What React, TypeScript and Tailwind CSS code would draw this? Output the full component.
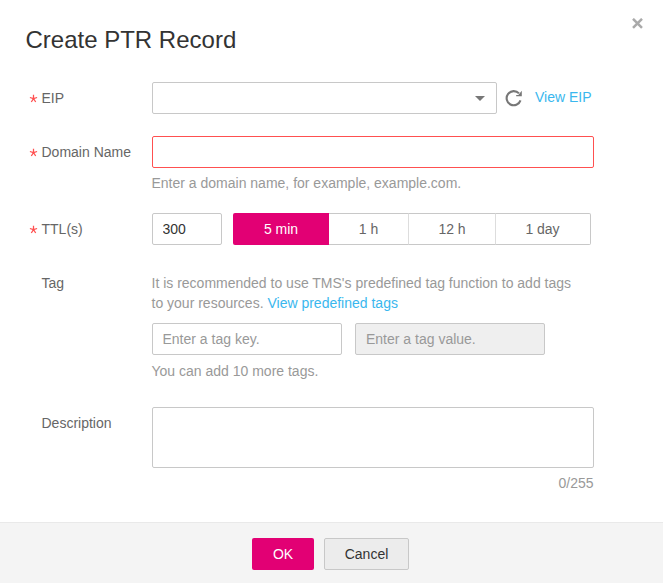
import type { ReactNode } from "react";

type RowProps = { label: string; required?: boolean; className: string; children: ReactNode };

const field = "block h-8 rounded-[2px] border border-solid bg-white pr-2.5 pl-[9.5px] text-sm text-[#333] outline-none placeholder:text-[#999] placeholder:opacity-100";

function Row({ label, required = false, className, children }: RowProps) {
  return (
    <div className={`flex items-start pl-[29px] ${className}`}>
      <div className="flex h-8 w-[123px] shrink-0 items-center text-[#666]">
        <span className="flex w-[12.5px] shrink-0">
          {required && (
            <svg className="mt-px" width="9" height="9" viewBox="0 0 9 9" fill="none" stroke="#ff5050" strokeWidth="1.25">
              <path d="M4.5 4.6V.8M4.5 4.6.9 3.5M4.5 4.6l3.6-1.1M4.5 4.6 2.3 8M4.5 4.6 6.7 8" />
            </svg>
          )}
        </span>
        <span>{label}</span>
      </div>
      {children}
    </div>
  );
}

export default function App() {
  return (
    <div className="flex h-[583px] w-[663px] flex-col overflow-hidden bg-white font-['Liberation_Sans',Arial,sans-serif] text-sm leading-5 text-[#999]">
      <header className="flex h-[82px] shrink-0 items-start justify-between pr-5 pl-[25.5px]">
        <h1 className="mt-6 text-2xl leading-8 text-[#333]">Create PTR Record</h1>
        <button className="mt-[18px]" aria-label="Close">
          <svg width="11" height="11" viewBox="0 0 11 11" fill="none" stroke="#aaa" strokeWidth="2.5">
            <path d="m1 .8 9 9M10 .8l-9 9" />
          </svg>
        </button>
      </header>

      <main className="h-[440px] shrink-0">
        <Row label="EIP" required className="h-[54px]">
          <div className="flex h-8 w-[345px] items-center justify-end rounded-[2px] border border-[#c8c8c8] pr-[11px]">
            <svg className="mt-px" width="10" height="5" viewBox="0 0 10 5" fill="#777">
              <path d="M0 0h10L5 5z" />
            </svg>
          </div>
          <svg className="mt-2 ml-2" width="18" height="17" viewBox="0 0 18 17" fill="none">
            <path d="M14 3.4A7.1 7.1 0 1 0 15.5 10.4" stroke="#777" strokeWidth="2.1" />
            <path d="M16.8.7v5.6h-5.6V4.9h2.1z" fill="#777" />
          </svg>
          <a className="mt-[5px] ml-3 text-[#3ab7ee]">View EIP</a>
        </Row>

        <Row label="Domain Name" required className="h-[77px]">
          <div>
            <input aria-label="Domain Name" className={`${field} w-[442px] border-[#ff5050]`} />
            <p className="mt-[5px] -ml-[0.5px]">Enter a domain name, for example, example.com.</p>
          </div>
        </Row>

        <Row label="TTL(s)" required className="h-[54px]">
          <input aria-label="TTL" defaultValue="300" className={`${field} w-[70px] border-[#c8c8c8]`} />
          <div className="ml-[11px] flex h-8 text-[#666]">
            <button className="w-24 rounded-l-[2px] bg-[#e20074] text-white">5 min</button>
            <button className="w-20 border-y border-r border-y-[#c8c8c8] border-r-[#ddd]">1 h</button>
            <button className="w-[87px] border-y border-r border-y-[#c8c8c8] border-r-[#ddd]">12 h</button>
            <button className="w-[95px] rounded-r-[2px] border-y border-r border-[#c8c8c8] pr-px">1 day</button>
          </div>
        </Row>

        <Row label="Tag" className="h-[140px]">
          <div className="mt-1.5 w-[442px]">
            <p className="-ml-[0.5px]">
              It is recommended to use TMS's predefined tag function to add tags
              <br />
              to your resources. <a className="text-[#3ab7ee]">View predefined tags</a>
            </p>
            <div className="mt-2.5 flex gap-[13px]">
              <input placeholder="Enter a tag key." className={`${field} w-[190px] border-[#c8c8c8]`} />
              <input placeholder="Enter a tag value." disabled className={`${field} w-[190px] border-[#c8c8c8] bg-[#efefef]! pl-2.5!`} />
            </div>
            <p className="mt-1.5 -ml-[0.5px]">You can add 10 more tags.</p>
          </div>
        </Row>

        <Row label="Description" className="">
          <div>
            <textarea aria-label="Description" className="block h-[61px] w-[442px] resize-none rounded-[2px] border border-[#c8c8c8] outline-none" />
            <p className="mt-[5px] pr-[0.5px] text-right">0/255</p>
          </div>
        </Row>
      </main>

      <footer className="flex h-[61px] shrink-0 items-start justify-center gap-2.5 border-t border-[#e9e9e9] bg-[#f4f4f4] pt-[15px] pr-0.5">
        <button className="h-8 w-[62px] rounded-[2px] bg-[#e20074] text-white">OK</button>
        <button className="h-8 w-[85px] rounded-[2px] border border-[#c8c8c8] bg-[#ececec] text-[#333]">Cancel</button>
      </footer>
    </div>
  );
}
